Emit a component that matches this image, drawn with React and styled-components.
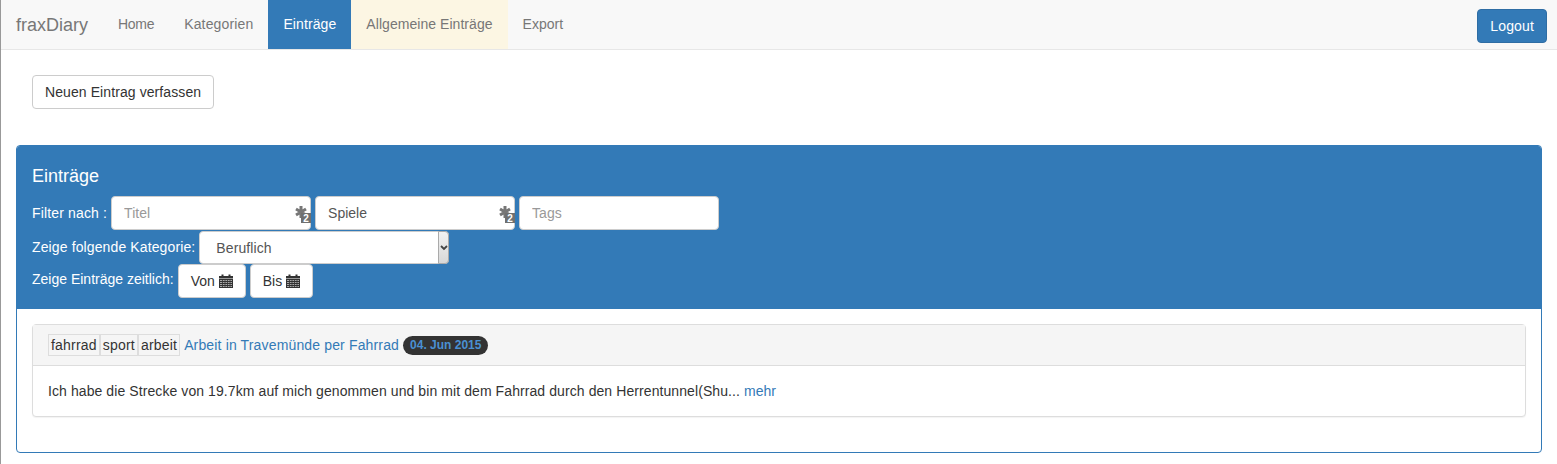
import React from "react";
import styled, { createGlobalStyle } from "styled-components";

const Global = createGlobalStyle`
  * { box-sizing: border-box; }
  html, body { margin: 0; padding: 0; background: #fff; }
  body {
    font-family: "Liberation Sans", Arial, sans-serif;
    font-size: 14px;
    line-height: 20px;
    color: #333;
    border-left: 1px solid #999;
    min-height: 464px;
  }
`;

const Navbar = styled.nav`
  display: flex;
  align-items: stretch;
  height: 50px;
  background: #f8f8f8;
  border-bottom: 1px solid #e7e7e7;
`;
const Brand = styled.a`
  font-size: 18px;
  line-height: 20px;
  color: #777;
  padding: 15px;
`;
const NavItem = styled.a`
  padding: 14px 15px 15px;
  letter-spacing: ${(p) => p.$track || 0}px;
  color: ${(p) => (p.$active ? "#fff" : "#777")};
  background: ${(p) => (p.$active ? "#337ab7" : p.$warm ? "#fcf6e3" : "transparent")};
`;
const Spacer = styled.div`
  flex: 1;
`;
const Button = styled.button`
  display: inline-flex;
  align-items: center;
  gap: ${(p) => p.$gap || 0}px;
  height: 34px;
  padding: 6px 12px;
  font: inherit;
  letter-spacing: ${(p) => p.$track || 0}px;
  color: #333;
  background: #fff;
  border: 1px solid #ccc;
  border-radius: 4px;
`;
const LogoutButton = styled(Button)`
  margin: 9px 10px 0 0;
  color: #fff;
  background: #337ab7;
  border-color: #2e6da4;
`;
const Content = styled.main`
  padding: 25px 15px 0;
`;
const Actions = styled.div`
  padding: 0 16px;
  margin-bottom: 36px;
`;
const Panel = styled.section`
  border: 1px solid #337ab7;
  border-radius: 4px;
  overflow: hidden;
  height: 308px;
`;
const PanelHead = styled.header`
  background: #337ab7;
  color: #fff;
  padding: 20px 15px 11px;
  height: 163px;
`;
const Title = styled.h3`
  margin: 0 0 9px;
  font-size: 18px;
  line-height: 21px;
  font-weight: 400;
`;
const FilterRow = styled.div`
  display: flex;
  align-items: flex-start;
  height: 34px;
`;
const FilterLabel = styled.label`
  line-height: 20px;
  letter-spacing: ${(p) => p.$track || 0}px;
  margin-top: ${(p) => p.$top}px;
  margin-right: ${(p) => p.$gap}px;
`;
const InputWrap = styled.div`
  position: relative;
  width: 200px;
  height: 34px;
  margin-right: 4px;
`;
const Input = styled.input`
  display: block;
  width: 100%;
  height: 100%;
  padding: 6px 12px;
  font: inherit;
  color: #555;
  background: #fff;
  border: 1px solid #ccc;
  border-radius: 4px;
  &::placeholder { color: #999; opacity: 1; }
`;
const KeyIcon = styled.svg`
  position: absolute;
  right: 0;
  top: 9px;
`;
const SelectWrap = styled.div`
  position: relative;
  width: 250px;
  height: 33px;
  margin-top: 1px;
`;
const Select = styled.select`
  display: block;
  width: 100%;
  height: 100%;
  padding: 6px 12px 6px 16px;
  font: inherit;
  letter-spacing: 0.1px;
  color: #555;
  background: #fff;
  border: 1px solid #ccc;
  border-radius: 4px;
  appearance: none;
`;
const SelectArrow = styled.span`
  position: absolute;
  right: 0;
  top: 0;
  bottom: 0;
  width: 11px;
  display: flex;
  align-items: center;
  justify-content: center;
  background: linear-gradient(#f2f2f2, #d8d8d8);
  border: 1px solid #aaa;
  border-radius: 0 4px 4px 0;
  pointer-events: none;
`;
const DateButtons = styled.div`
  display: flex;
  gap: 4px;
`;
const PanelBody = styled.div`
  padding: 15px;
`;
const EntryCard = styled.article`
  background: #fff;
  border: 1px solid #ddd;
  border-radius: 4px;
  box-shadow: 0 1px 1px rgba(0, 0, 0, 0.05);
`;
const EntryHead = styled.div`
  display: flex;
  align-items: center;
  height: 41px;
  padding: 0 15px;
  background: #f5f5f5;
  border-bottom: 1px solid #ddd;
`;
const Tag = styled.span`
  height: 22px;
  line-height: 20px;
  padding: 0 2px;
  letter-spacing: 0.2px;
  color: #333;
  border: 1px solid #ddd;
  background: #f5f5f5;
  margin-right: ${(p) => p.$gap || 0}px;
`;
const EntryLink = styled.a`
  color: #337ab7;
  letter-spacing: ${(p) => p.$track || 0}px;
`;
const DateBadge = styled.span`
  margin-left: 4px;
  height: 19px;
  padding: 3px 7px;
  font-size: 12px;
  font-weight: 700;
  line-height: 13px;
  color: #4a90d2;
  background: #333;
  border-radius: 10px;
`;
const EntryBody = styled.p`
  margin: 0;
  padding: 15px;
  height: 50px;
  letter-spacing: 0.085px;
`;

const Key = () => (
  <KeyIcon width="16" height="18" viewBox="0 0 16 18">
    <g stroke="#777" strokeWidth="3" strokeLinecap="butt">
      <path d="M6 1v12M1 4l10 6M11 4L1 10" />
    </g>
    <rect x="6" y="8" width="10" height="10" fill="#707070" />
    <text x="11" y="17" textAnchor="middle" fontSize="10" fontWeight="700" fill="#fff" fontFamily="Liberation Sans, sans-serif">
      2
    </text>
  </KeyIcon>
);

const Calendar = () => (
  <svg width="14" height="14" viewBox="0 0 14 14">
    <path d="M0 2h2.5V0.5h2V2h5V0.5h2V2H14v2.5H0z" fill="#333" />
    <path d="M0 5h14v9H0z" fill="#333" />
    <path
      d="M1 6.5h12M1 8.5h12M1 10.5h12M1 12.5h12"
      stroke="#ddd"
      strokeWidth="0.7"
    />
    <path d="M3.5 5.5v8M6 5.5v8M8.5 5.5v8M11 5.5v8" stroke="#333" strokeWidth="0.8" />
  </svg>
);

export default function App() {
  return (
    <>
      <Global />
      <Navbar>
        <Brand>fraxDiary</Brand>
        <NavItem $track={-0.3}>Home</NavItem>
        <NavItem $track={0.15}>Kategorien</NavItem>
        <NavItem $active $track={0.1}>Einträge</NavItem>
        <NavItem $warm $track={0.05}>Allgemeine Einträge</NavItem>
        <NavItem>Export</NavItem>
        <Spacer />
        <LogoutButton $track={0.15}>Logout</LogoutButton>
      </Navbar>
      <Content>
        <Actions>
          <Button $track={0.09}>Neuen Eintrag verfassen</Button>
        </Actions>
        <Panel>
          <PanelHead>
            <Title>Einträge</Title>
            <FilterRow>
              <FilterLabel $top={7} $gap={4} $track={0.15}>Filter nach :</FilterLabel>
              <InputWrap>
                <Input placeholder="Titel" />
                <Key />
              </InputWrap>
              <InputWrap>
                <Input defaultValue="Spiele" />
                <Key />
              </InputWrap>
              <InputWrap>
                <Input placeholder="Tags" />
              </InputWrap>
            </FilterRow>
            <FilterRow>
              <FilterLabel $top={7} $gap={4} $track={0.12}>Zeige folgende Kategorie:</FilterLabel>
              <SelectWrap>
                <Select defaultValue="Beruflich">
                  <option>Beruflich</option>
                </Select>
                <SelectArrow>
                  <svg width="8" height="6" viewBox="0 0 8 6">
                    <path d="M1 1l3 3 3-3" fill="none" stroke="#444" strokeWidth="1.8" />
                  </svg>
                </SelectArrow>
              </SelectWrap>
            </FilterRow>
            <FilterRow>
              <FilterLabel $top={5} $gap={4}>Zeige Einträge zeitlich:</FilterLabel>
              <DateButtons>
                <Button $gap={4}>Von <Calendar /></Button>
                <Button $gap={4}>Bis <Calendar /></Button>
              </DateButtons>
            </FilterRow>
          </PanelHead>
          <PanelBody>
            <EntryCard>
              <EntryHead>
                <Tag>fahrrad</Tag>
                <Tag>sport</Tag>
                <Tag $gap={4}>arbeit</Tag>
                <EntryLink $track={0.15}>Arbeit in Travemünde per Fahrrad</EntryLink>
                <DateBadge>04. Jun 2015</DateBadge>
              </EntryHead>
              <EntryBody>
                Ich habe die Strecke von 19.7km auf mich genommen und bin mit dem Fahrrad durch den Herrentunnel(Shu... <EntryLink>mehr</EntryLink>
              </EntryBody>
            </EntryCard>
          </PanelBody>
        </Panel>
      </Content>
    </>
  );
}
